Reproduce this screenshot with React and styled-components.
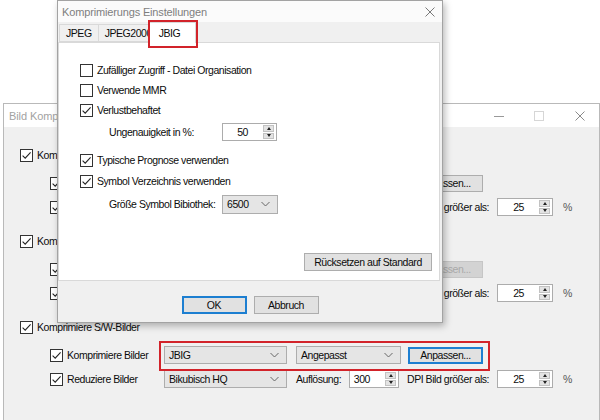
import React from "react";
import styled, { createGlobalStyle } from "styled-components";

const GlobalStyle = createGlobalStyle`
  html, body { margin: 0; padding: 0; background: #fff; }
  body {
    font-family: "Liberation Sans", Arial, sans-serif;
    font-size: 10.5px;
    letter-spacing: -0.45px;
    color: #0c0c0c;
  }
  * { box-sizing: border-box; }
`;

const Desktop = styled.div`
  position: relative;
  width: 600px;
  height: 420px;
  overflow: hidden;
  background: #fff;
`;

/* ---------- background window ---------- */

const Window = styled.div`
  position: absolute;
  left: 3px;
  top: 103px;
  width: 597px;
  height: 330px;
  border: 1px solid #b9b9b9;
  background: #f0f0f0;
  display: flex;
  flex-direction: column;
`;

const WindowTitle = styled.div`
  height: 23px;
  flex: none;
  background: #fff;
  display: flex;
  align-items: center;
  padding-left: 5px;
  color: #a2a2a2;
  font-size: 11px;
  letter-spacing: -0.1px;
`;

const Caption = styled.div`
  margin-left: auto;
  display: flex;
  height: 100%;
`;

const CaptionButton = styled.div`
  width: ${(p) => p.$w}px;
  height: 100%;
  display: flex;
  align-items: center;
  justify-content: center;
`;

const WindowBody = styled.div`
  padding-top: 18px;
  display: flex;
  flex-direction: column;
`;

const Group = styled.div`
  display: flex;
  flex-direction: column;
  gap: 4px;
  & + & { margin-top: 14px; }
`;

const GroupHeader = styled.div`
  height: 20px;
  display: flex;
  align-items: center;
  padding-left: 16px;
  margin-bottom: 4px;
`;

const SubRow = styled.div`
  height: 20px;
  display: flex;
  align-items: center;
  padding-left: 46px;
  white-space: nowrap;
`;

const Highlight = styled.div`
  position: relative;
  display: flex;
  align-items: center;
  &::after {
    content: "";
    position: absolute;
    top: -5px;
    left: -5px;
    right: -7px;
    bottom: -7px;
    border: 2px solid #d2232a;
    pointer-events: none;
  }
`;

const FieldLabel = styled.span`
  width: ${(p) => p.$w}px;
  margin-left: ${(p) => p.$ml || 0}px;
  flex: none;
  white-space: nowrap;
`;

const Unit = styled.span`
  margin-left: 10px;
  color: #555;
`;

/* ---------- controls ---------- */

const CheckField = styled.label`
  display: flex;
  align-items: center;
  gap: 4px;
  width: ${(p) => (p.$w ? `${p.$w}px` : "auto")};
  flex: none;
  white-space: nowrap;
`;

const Box = styled.span`
  width: 13px;
  height: 13px;
  border: 1px solid #333;
  background: #fff;
  display: inline-flex;
  align-items: center;
  justify-content: center;
  flex: none;
`;

const Check = ({ checked, width, children }) => (
  <CheckField $w={width}>
    <Box>
      {checked && (
        <svg width="11" height="11" viewBox="0 0 11 11">
          <polyline points="1.6,5.6 4.2,8.2 9.6,2.4" fill="none" stroke="#222" strokeWidth="1.1" />
        </svg>
      )}
    </Box>
    <span>{children}</span>
  </CheckField>
);

const ComboBox = styled.div`
  width: ${(p) => p.$w}px;
  height: ${(p) => p.$h || 18}px;
  margin-left: ${(p) => p.$ml || 0}px;
  flex: none;
  border: 1px solid #adadad;
  background: #e5e5e5;
  display: flex;
  align-items: center;
  justify-content: space-between;
  padding: 0 7px 0 4px;
`;

const Combo = ({ w, h, ml, children }) => (
  <ComboBox $w={w} $h={h} $ml={ml}>
    <span>{children}</span>
    <svg width="9" height="6" viewBox="0 0 9 6">
      <polyline points="0.5,1 4.5,5 8.5,1" fill="none" stroke="#666" strokeWidth="1" />
    </svg>
  </ComboBox>
);

const Button = styled.div`
  width: ${(p) => p.$w}px;
  height: ${(p) => p.$h || 18}px;
  margin-left: ${(p) => p.$ml || 0}px;
  flex: none;
  display: flex;
  align-items: center;
  justify-content: center;
  color: ${(p) => (p.$disabled ? "#a9a9a9" : "#0c0c0c")};
  background: ${(p) => (p.$disabled ? "#d3d3d3" : "#e1e1e1")};
  border: 1px solid ${(p) => (p.$default ? "#1d7fd1" : p.$disabled ? "#c6c6c6" : "#adadad")};
  box-shadow: ${(p) => (p.$default ? "inset 0 0 0 1px #1d7fd1" : "none")};
  white-space: nowrap;
`;

const SpinFrame = styled.div`
  width: ${(p) => p.$w}px;
  height: 18px;
  margin-left: ${(p) => p.$ml || 0}px;
  flex: none;
  border: 1px solid #acacac;
  background: #fff;
  display: flex;
  align-items: center;
  justify-content: flex-end;
  padding: 1px 2px 1px 1px;
`;

const SpinValue = styled.span`
  padding-right: 15px;
`;

const SpinArrows = styled.div`
  width: 11px;
  height: 100%;
  display: flex;
  flex-direction: column;
  gap: 1px;
`;

const SpinArrow = styled.div`
  flex: 1;
  background: #e3e3e3;
  border: 1px solid #c2c2c2;
  display: flex;
  align-items: center;
  justify-content: center;
  &::before {
    content: "";
    border-left: 2.5px solid transparent;
    border-right: 2.5px solid transparent;
    ${(p) => (p.$down ? "border-top: 3px solid #222;" : "border-bottom: 3px solid #222;")}
  }
`;

const Spin = ({ w, ml, value }) => (
  <SpinFrame $w={w} $ml={ml}>
    <SpinValue>{value}</SpinValue>
    <SpinArrows>
      <SpinArrow />
      <SpinArrow $down />
    </SpinArrows>
  </SpinFrame>
);

/* ---------- dialog ---------- */

const Dialog = styled.div`
  position: absolute;
  left: 57px;
  top: 0;
  width: 386px;
  height: 323px;
  z-index: 2;
  background: #f0f0f0;
  border: 1px solid #a3a3a3;
  box-shadow: 2px 3px 7px rgba(0, 0, 0, 0.28);
  display: flex;
  flex-direction: column;
`;

const DialogTitle = styled.div`
  height: 21px;
  flex: none;
  background: #fbfbfb;
  display: flex;
  align-items: center;
  justify-content: space-between;
  padding: 0 7px 0 4px;
  color: #7e7e7e;
  font-size: 11px;
  letter-spacing: -0.15px;
`;

const TabStrip = styled.div`
  height: 20px;
  flex: none;
  display: flex;
  align-items: flex-end;
  padding-left: 1px;
`;

const Tab = styled.div`
  position: relative;
  height: ${(p) => (p.$active ? 21 : 18)}px;
  width: ${(p) => (p.$w ? `${p.$w}px` : "auto")};
  margin-left: ${(p) => (p.$active ? -1 : 0)}px;
  margin-right: -1px;
  margin-bottom: ${(p) => (p.$active ? -1 : 0)}px;
  z-index: ${(p) => (p.$active ? 1 : 0)};
  padding: ${(p) => (p.$active ? "4px 0 0 9px" : "0 6px")};
  display: flex;
  align-items: ${(p) => (p.$active ? "flex-start" : "center")};
  overflow: ${(p) => (p.$active ? "visible" : "hidden")};
  white-space: nowrap;
  background: ${(p) => (p.$active ? "#fff" : "#f0f0f0")};
  border: 1px solid #d9d9d9;
  border-bottom: ${(p) => (p.$active ? "none" : "1px solid #d9d9d9")};
  &::after {
    content: "";
    display: ${(p) => (p.$marked ? "block" : "none")};
    position: absolute;
    top: -3px;
    left: -2px;
    right: -3px;
    bottom: -5px;
    border: 2px solid #d2232a;
  }
`;

const Panel = styled.div`
  height: 239px;
  flex: none;
  margin-right: 2px;
  background: #fff;
  border: 1px solid #d9d9d9;
  padding: 17px 7px 9px 21px;
  display: flex;
  flex-direction: column;
`;

const PanelRow = styled.div`
  height: 20px;
  flex: none;
  display: flex;
  align-items: center;
  margin-top: ${(p) => p.$mt || 0}px;
  padding-left: ${(p) => (p.$indent ? 29 : 0)}px;
`;

const ResetRow = styled.div`
  margin-top: auto;
  display: flex;
  justify-content: flex-end;
`;

const Footer = styled.div`
  flex: 1;
  display: flex;
  justify-content: center;
  gap: 7px;
  padding-top: 15px;
`;

const groups = [
  {
    title: "Komprimiere Farbbilder",
    combo: "JPEG",
    quality: "Maximal",
    res: 150,
    pct: 25,
    disabled: false,
  },
  {
    title: "Komprimiere Graustufenbilder",
    combo: "JPEG",
    quality: "Maximal",
    res: 150,
    pct: 25,
    disabled: true,
  },
  {
    title: "Komprimiere S/W-Bilder",
    combo: "JBIG",
    quality: "Angepasst",
    res: 300,
    pct: 25,
    marked: true,
  },
];

const CompressRow = ({ g }) => {
  const controls = (
    <>
      <Combo w={123}>{g.combo}</Combo>
      <Combo w={105} ml={9}>{g.quality}</Combo>
      <Button $w={75} $h={17} $ml={7} $disabled={g.disabled} $default={g.marked}>
        Anpassen...
      </Button>
    </>
  );
  return (
    <SubRow>
      <Check checked width={114}>Komprimiere Bilder</Check>
      {g.marked ? <Highlight>{controls}</Highlight> : controls}
    </SubRow>
  );
};

const ReduceRow = ({ g }) => (
  <SubRow>
    <Check checked width={114}>Reduziere Bilder</Check>
    <Combo w={123}>Bikubisch HQ</Combo>
    <FieldLabel $w={53} $ml={9}>Auflösung:</FieldLabel>
    <Spin w={50} value={g.res} />
    <FieldLabel $w={90} $ml={8}>DPI Bild größer als:</FieldLabel>
    <Spin w={56} value={g.pct} />
    <Unit>%</Unit>
  </SubRow>
);

export default function App() {
  return (
    <Desktop>
      <GlobalStyle />
      <Window>
        <WindowTitle>
          Bild Komprimierung
          <Caption>
            <CaptionButton $w={37}>
              <svg width="10" height="10" viewBox="0 0 10 10">
                <line x1="0" y1="5.5" x2="10" y2="5.5" stroke="#999" strokeWidth="1" />
              </svg>
            </CaptionButton>
            <CaptionButton $w={43}>
              <svg width="10" height="10" viewBox="0 0 10 10">
                <rect x="0.5" y="0.5" width="9" height="9" fill="none" stroke="#d6d6d6" strokeWidth="1" />
              </svg>
            </CaptionButton>
            <CaptionButton $w={39}>
              <svg width="10" height="10" viewBox="0 0 10 10">
                <path d="M0.5 0.5 L9.5 9.5 M9.5 0.5 L0.5 9.5" stroke="#8a8a8a" strokeWidth="1" />
              </svg>
            </CaptionButton>
          </Caption>
        </WindowTitle>
        <WindowBody>
          {groups.map((g) => (
            <Group key={g.title}>
              <GroupHeader>
                <Check checked>{g.title}</Check>
              </GroupHeader>
              <CompressRow g={g} />
              <ReduceRow g={g} />
            </Group>
          ))}
        </WindowBody>
      </Window>

      <Dialog>
        <DialogTitle>
          Komprimierungs Einstellungen
          <svg width="10" height="10" viewBox="0 0 10 10">
            <path d="M0.5 0.5 L9.5 9.5 M9.5 0.5 L0.5 9.5" stroke="#7a7a7a" strokeWidth="1" />
          </svg>
        </DialogTitle>
        <TabStrip>
          <Tab>JPEG</Tab>
          <Tab $w={53}>JPEG2000</Tab>
          <Tab $active $marked $w={47}>JBIG</Tab>
        </TabStrip>
        <Panel>
          <PanelRow>
            <Check>Zufälliger Zugriff - Datei Organisation</Check>
          </PanelRow>
          <PanelRow>
            <Check>Verwende MMR</Check>
          </PanelRow>
          <PanelRow>
            <Check checked>Verlustbehaftet</Check>
          </PanelRow>
          <PanelRow $indent $mt={2}>
            <FieldLabel $w={113}>Ungenauigkeit in %:</FieldLabel>
            <Spin w={55} value={50} />
          </PanelRow>
          <PanelRow $mt={8}>
            <Check checked>Typische Prognose verwenden</Check>
          </PanelRow>
          <PanelRow $mt={1}>
            <Check checked>Symbol Verzeichnis verwenden</Check>
          </PanelRow>
          <PanelRow $indent $mt={3}>
            <FieldLabel $w={113}>Größe Symbol Bibiothek:</FieldLabel>
            <Combo w={56} h={19}>6500</Combo>
          </PanelRow>
          <ResetRow>
            <Button $w={128}>Rücksetzen auf Standard</Button>
          </ResetRow>
        </Panel>
        <Footer>
          <Button $w={65} $default>OK</Button>
          <Button $w={65}>Abbruch</Button>
        </Footer>
      </Dialog>
    </Desktop>
  );
}
